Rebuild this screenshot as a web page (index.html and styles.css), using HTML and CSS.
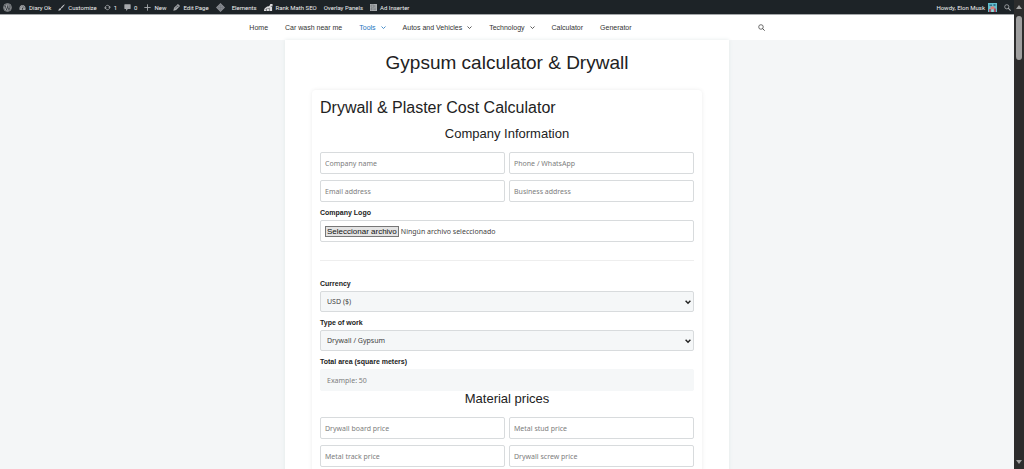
FILE: index.html
```html
<!DOCTYPE html>
<html lang="en">
<head>
<meta charset="utf-8">
<meta name="viewport" content="width=device-width, initial-scale=1">
<title>Gypsum calculator &amp; Drywall</title>
<link rel="stylesheet" href="styles.css">
</head>
<body>
<div class="shell">
  <div class="page">
    <div class="adminbar">
      <a class="ab-item" href="#" aria-label="WordPress"><svg class="ab-logo" viewBox="0 0 20 20"><circle cx="10" cy="10" r="8.8" fill="none" stroke="#a7aaad" stroke-width="1.6"/><circle cx="10" cy="10" r="7.2" fill="#a7aaad"/><path d="M3.4 6.5h3.4M8.6 6.5h4M4.8 6.5l3.2 9 2.4-6.7M10 6.5l3.3 9 2-6.2c.5-1.700-1-2.600-1-4" fill="none" stroke="#1d2327" stroke-width="1.5"/></svg></a>
      <a class="ab-item" href="#"><svg class="ab-icon" viewBox="0 0 20 20"><path d="M2 17C-.5 9 4 3 10 3s10.500 6 8 14z" fill="#a7aaad"/><path d="M10 14l3-7M4 11h2M6 6.500l1 1.300M15 11h2M10 4.500v2" stroke="#1d2327" stroke-width="1.600"/><circle cx="10" cy="14" r="2" fill="#1d2327"/></svg>Diary Ok</a>
      <a class="ab-item" href="#"><svg class="ab-icon" viewBox="0 0 20 20"><path d="M19.500 .5c-1-.8-9 6.500-11.500 10l2.300 2.200c3.200-2.700 10-11 9.200-12.200zM7 11.500c-3 0-3 4-7 7 5 1.300 9-1.500 9-5z" fill="#c3c4c7"/></svg>Customize</a>
      <a class="ab-item" href="#"><svg class="ab-icon" viewBox="0 0 20 20"><path d="M4 11a6 6 0 0 1 10-5.500M16 9a6 6 0 0 1-10 5.500" fill="none" stroke="#a7aaad" stroke-width="2.400"/><path d="M0 10h8l-4 5zM12 10h8l-4-5z" fill="#a7aaad"/></svg>1</a>
      <a class="ab-item" href="#"><svg class="ab-icon" viewBox="0 0 20 20"><path d="M2 1h16l1 1v11l-1 1h-7l-5 6v-6H2l-1-1V2z" fill="#a7aaad"/></svg>0</a>
      <a class="ab-item" href="#"><svg class="ab-icon" viewBox="0 0 20 20"><path d="M10 1v18M1 10h18" stroke="#a7aaad" stroke-width="2.600"/></svg>New</a>
      <a class="ab-item" href="#"><svg class="ab-icon" viewBox="0 0 20 20"><path d="M1 19l2-8L13 1c2-2 8 4 6 6L9 17z" fill="#a7aaad"/><path d="M6 13l8-8M11 4l5 5" stroke="#1d2327" stroke-width="1.600"/></svg>Edit Page</a>
      <a class="ab-item" href="#" aria-label="Site tools"><svg class="ab-logo" viewBox="0 0 20 20"><path d="M10 0l10 10-10 10L0 10z" fill="#8c8f94"/><path d="M10 4l6 6-6 6-6-6zM10 4v12M4 10h12" fill="none" stroke="#6b7077" stroke-width="1.200"/></svg></a>
      <a class="ab-item" href="#">Elements</a>
      <a class="ab-item" href="#"><svg class="ab-logo" viewBox="0 0 20 20"><path d="M0 14h5v4H0zM6 12h5v6H6zM12 8h6v10h-6z" fill="#dcdcde"/><path d="M1 12l6-4 4-1 3-3-1-2h6v6l-2-2-5 5-5 1-5 2z" fill="#dcdcde"/></svg>Rank Math SEO</a>
      <a class="ab-item" href="#">Overlay Panels</a>
      <a class="ab-item" href="#"><svg class="ab-icon" viewBox="0 0 20 20"><path d="M0 0h20v20H0z" fill="#a7aaad"/><path d="M3 3h8v6H3zM3 12h3v5H3zM9 12h8M9 16h8M14 3v6" fill="none" stroke="#666b70" stroke-width="1.500"/></svg>Ad Inserter</a>
      <div class="ab-right">
        <a class="ab-item" href="#">Howdy, Elon Musk<svg class="ab-logo" viewBox="0 0 18 18"><path d="M0 0h18v18H0z" fill="#62bdcb"/><path d="M3 3h5v3H3zM11 2h4v4h-4z" fill="#2f718d"/><path d="M5 7h8v6H5z" fill="#d9817b"/><path d="M2 12h4v6H2zM12 11h4v7h-4z" fill="#a64f68"/><path d="M7 13h4v5H7z" fill="#9ed9d2"/></svg></a>
        <button class="icon-button" type="button" aria-label="Search admin"><svg class="ab-icon" viewBox="0 0 20 20"><circle cx="8" cy="8" r="6" fill="none" stroke="#a7aaad" stroke-width="2.400"/><path d="M12 12l7 7" stroke="#a7aaad" stroke-width="3"/></svg></button>
      </div>
    </div>
    <header class="site-header">
      <nav class="site-nav">
        <a href="#">Home</a>
        <a href="#">Car wash near me</a>
        <a class="current" href="#">Tools<svg class="chevron" viewBox="0 0 10 10"><path d="M1 3l4 4 4-4" fill="none" stroke="currentColor" stroke-width="1.600"/></svg></a>
        <a href="#">Autos and Vehicles<svg class="chevron" viewBox="0 0 10 10"><path d="M1 3l4 4 4-4" fill="none" stroke="currentColor" stroke-width="1.600"/></svg></a>
        <a href="#">Technology<svg class="chevron" viewBox="0 0 10 10"><path d="M1 3l4 4 4-4" fill="none" stroke="currentColor" stroke-width="1.600"/></svg></a>
        <a href="#">Calculator</a>
        <a href="#">Generator</a>
        <button class="icon-button nav-search" type="button" aria-label="Search"><svg class="ab-icon" viewBox="0 0 20 20"><circle cx="8.500" cy="8.500" r="6.500" fill="none" stroke="#333" stroke-width="2"/><path d="M13 13l6 6" stroke="#333" stroke-width="2.400"/></svg></button>
      </nav>
    </header>
    <main class="content">
      <h1>Gypsum calculator &amp; Drywall</h1>
      <form class="card">
        <h2>Drywall &amp; Plaster Cost Calculator</h2>
        <h3>Company Information</h3>
        <div class="grid">
          <input class="field" type="text" placeholder="Company name" aria-label="Company name">
          <input class="field" type="tel" placeholder="Phone / WhatsApp" aria-label="Phone / WhatsApp">
          <input class="field" type="email" placeholder="Email address" aria-label="Email address">
          <input class="field" type="text" placeholder="Business address" aria-label="Business address">
        </div>
        <label class="label" for="logo">Company Logo</label>
        <label class="field file" for="logo"><span class="file-button">Seleccionar archivo</span><span>Ningún archivo seleccionado</span></label>
        <input class="visually-hidden" type="file" id="logo">
        <hr>
        <label class="label" for="currency">Currency</label>
        <div class="select-wrap"><select class="field tinted" id="currency"><option>USD ($)</option></select><svg class="select-arrow" viewBox="0 0 10 10"><path d="M1 3l4 4 4-4" fill="none" stroke="currentColor" stroke-width="2.400"/></svg></div>
        <label class="label" for="work">Type of work</label>
        <div class="select-wrap"><select class="field tinted" id="work"><option>Drywall / Gypsum</option></select><svg class="select-arrow" viewBox="0 0 10 10"><path d="M1 3l4 4 4-4" fill="none" stroke="currentColor" stroke-width="2.400"/></svg></div>
        <label class="label" for="area">Total area (square meters)</label>
        <input class="field tinted plain" id="area" type="number" placeholder="Example: 50">
        <h3 class="prices">Material prices</h3>
        <div class="grid">
          <input class="field" type="number" placeholder="Drywall board price" aria-label="Drywall board price">
          <input class="field" type="number" placeholder="Metal stud price" aria-label="Metal stud price">
          <input class="field" type="number" placeholder="Metal track price" aria-label="Metal track price">
          <input class="field" type="number" placeholder="Drywall screw price" aria-label="Drywall screw price">
        </div>
      </form>
    </main>
  </div>
  <div class="scrollbar" aria-hidden="true">
    <svg class="scroll-arrow" viewBox="0 0 6 4"><path d="M3 0l3 4H0z" fill="#a0a0a0"/></svg>
    <div class="thumb"></div>
    <svg class="scroll-arrow last" viewBox="0 0 6 4"><path d="M3 4l3-4H0z" fill="#a0a0a0"/></svg>
  </div>
</div>
</body>
</html>
```
FILE: styles.css
```css
* { box-sizing: border-box; }
body { margin: 0; font-family: "Liberation Sans", Arial, sans-serif; color: #222; background: #f4f6f7; }
a { color: inherit; text-decoration: none; }
svg { display: block; flex: none; }
.shell { display: grid; grid-template-columns: 1fr 10px; height: 100vh; overflow: hidden; }
.page { display: flex; flex-direction: column; min-width: 0; overflow: hidden; }

.adminbar { display: flex; align-items: center; gap: 7px; flex: none; height: 14px; padding: 0 3px; background: #1d2327; color: #f0f0f1; font: 6px Roboto, "Open Sans", sans-serif; white-space: nowrap; }
.ab-item { display: flex; align-items: center; gap: 3px; }
.ab-icon { width: 7px; height: 7px; }
.ab-logo { width: 9px; height: 9px; }
.ab-right { display: flex; align-items: center; gap: 7px; margin-left: auto; }
.icon-button { display: block; padding: 0; border: 0; background: none; }

.site-header { flex: none; background: #fff; border-top: 1px solid #a4a7a9; }
.site-nav { display: flex; align-items: center; gap: 17px; width: 52%; height: 25px; margin: 0 auto; padding: 0 6px; font-size: 7px; white-space: nowrap; color: #333; }
.site-nav a { display: flex; align-items: center; gap: 5px; }
.site-nav .current { color: #1e73be; }
.chevron { width: 5px; height: 5px; }
.nav-search { margin-left: auto; }

.content { flex: none; width: 444px; max-width: 100%; min-height: 100vh; margin: 0 auto; padding: 11px 27px; background: #fff; box-shadow: 0 0 4px #e3e8e9; }
h1, h2, h3 { margin: 0; font-weight: 400; }
h1 { font-size: 19px; line-height: 24px; text-align: center; }
.card { display: flex; flex-direction: column; margin-top: 15px; padding: 8px; border-radius: 4px; box-shadow: 0 0 4px #ececec; }
h2 { font-size: 16px; line-height: 20px; }
h3 { font-size: 13px; line-height: 16px; margin: 8px 0 10px; text-align: center; }
.prices { margin-top: 0; }
.grid { display: grid; grid-template-columns: 1fr 1fr; gap: 6px 4px; }
.field { width: 100%; min-width: 0; height: 22px; padding: 0 4px; border: 1px solid #d8dbdd; border-radius: 2px; background: #fff; color: #444; font: 7px "Noto Sans", "Open Sans", sans-serif; }
.field::placeholder { color: #7d7d7d; opacity: 1; }
.label { font-size: 7px; font-weight: 700; line-height: 9px; margin: 6px 0 3px; }
.file { display: flex; align-items: center; gap: 2px; margin: 0; }
.file-button { padding: 0 1px; border: 1px solid #777; background: #e4e4e4; color: #111; font: 8px/9px "Liberation Sans", Arial, sans-serif; }
.visually-hidden { position: absolute; width: 1px; height: 1px; opacity: 0; }
hr { width: 100%; height: 1px; margin: 18px 0 12px; border: 0; background: #eee; }
.select-wrap { display: grid; align-items: center; }
.select-wrap > * { grid-area: 1 / 1; }
.tinted { height: 21px; padding: 0 6px; background: #f5f7f8; appearance: none; }
.plain { height: 22px; border-color: #f5f7f8; }
.select-arrow { width: 6px; height: 6px; margin-right: 3px; justify-self: end; color: #222; pointer-events: none; }

.scrollbar { display: flex; flex-direction: column; align-items: center; padding: 5px 0; background: #2c2c2c; }
.scroll-arrow { width: 6px; height: 4px; }
.scroll-arrow.last { margin-top: auto; }
.thumb { width: 6px; height: 44px; margin-top: 7px; border-radius: 3px; background: #9f9f9f; }
```
